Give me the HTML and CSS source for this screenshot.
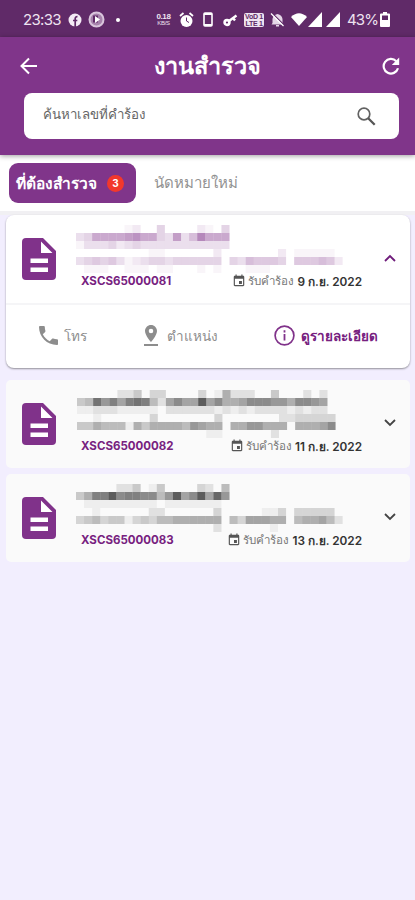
FILE: index.html
```html
<!DOCTYPE html>
<html lang="th">
<head>
<meta charset="utf-8">
<title>งานสำรวจ</title>
<link rel="stylesheet" href="styles.css">
</head>
<body>
<svg class="defs" width="0" height="0">
  <symbol id="doc" viewBox="0 0 34 42"><path fill="#80328a" d="M4 0H21L34 13V38Q34 42 30 42H4Q0 42 0 38V4Q0 0 4 0Z"/><path fill="#fff" d="M19 3.500V15H30.500ZM8.500 20.500h17.500v4.500H8.500ZM8.500 29.500h17.500v4.500H8.500Z"/></symbol>
  <symbol id="cal" viewBox="0 0 24 24"><path d="M17 12h-5v5h5v-5zM16 1v2H8V1H6v2H5c-1.110 0-2 .9-2 2v14c0 1.100.89 2 2 2h14c1.100 0 2-.9 2-2V5c0-1.100-.9-2-2-2h-1V1h-2zm3 18H5V8h14v11z"/></symbol>
</svg>
<div class="status">
  <div class="group left">
    <span class="clock">23:33</span>
    <svg width="14" height="14" viewBox="0 0 14 14"><circle cx="7" cy="7" r="6.500" fill="#f4eaf5"/><path d="M7.200 14V5.500Q7.200 3.500 9.500 3.700M5 7.500h4.300" fill="none" stroke="#602a68" stroke-width="1.700"/></svg>
    <svg width="17" height="17" viewBox="0 0 17 17"><circle cx="8.500" cy="8.500" r="7" fill="#a783ac" stroke="#d9c5dc" stroke-width="2"/><path d="M5 4.500h5v7H5z" fill="#602a68"/><path d="M7 5l5 3.500-5 3.500z" fill="#fff"/></svg>
    <i class="dot"></i>
  </div>
  <div class="group right">
    <span class="speed"><b>0.18</b><small>KB/S</small></span>
    <svg width="15" height="16" viewBox="0 0 15 16"><circle cx="7.500" cy="9" r="6" fill="#fff"/><path d="M1 4l3.500-3M14 4l-3.500-3" stroke="#fff" stroke-width="1.800"/><path d="M7.500 5.500V9l2.500 1.500" stroke="#602a68" fill="none"/></svg>
    <svg class="phone" width="10" height="15" viewBox="0 0 10 15"><rect x="1" y="1" width="8" height="13" rx="1" fill="none" stroke="#fff" stroke-width="1.600"/><path d="M1 2h8M1 13h8" stroke="#fff" stroke-width="2"/></svg>
    <svg class="key" width="15" height="14" viewBox="0 0 15 14"><circle cx="4" cy="9.500" r="2.400" fill="none" stroke="#fff" stroke-width="2.600"/><path d="M6 8l7.500-5.500M10 5l2 2.500" stroke="#fff" stroke-width="2.400"/></svg>
    <span class="volte"><b>VoD 1</b><b>LTE 1</b></span>
    <svg class="bell" width="15" height="15" viewBox="0 0 15 15"><path d="M2.500 11V7Q3 3 7.500 2Q12 3 12.500 7v4l1 1.500H1.500zM6 13h3v1.500H6z" fill="#e5d6e7"/><path d="M2.500 1.500l12 12" stroke="#602a68" stroke-width="1.200"/><path d="M1 1.500l12.500 12.500" stroke="#fff" stroke-width="1.200"/></svg>
    <svg class="wifi" width="16" height="13" viewBox="0 0 16 13"><path d="M0 4Q8-3.500 16 4L8 13Z" fill="#fff"/></svg>
    <svg class="sig" width="14" height="15" viewBox="0 0 14 15"><path d="M0 15L14 0V15z" fill="#fff"/></svg>
    <svg class="sig2" width="14" height="15" viewBox="0 0 14 15"><path d="M0 15L14 0V15z" fill="#fff"/></svg>
    <span class="pct">43%</span>
    <svg width="10" height="15" viewBox="0 0 10 15"><path d="M3 0h4v1.500H9q1 0 1 1V14q0 1-1 1H1q-1 0-1-1V2.500q0-1 1-1h2z" fill="#fff"/><path d="M2 3.500h6V8H2z" fill="#602a68"/></svg>
  </div>
</div>
<header class="header">
  <div class="bar">
    <svg width="18" height="18" viewBox="0 0 18 18"><path d="M17 9H2M9 1.500L1.500 9L9 16.500" fill="none" stroke="#fff" stroke-width="2"/></svg>
    <h1>งานสำรวจ</h1>
    <svg width="18" height="18" viewBox="0 0 18 18"><path d="M16 11.200A7.300 7.300 0 1 1 14.300 4.200" fill="none" stroke="#fff" stroke-width="2.200"/><path d="M17.200 .5V8H9.800Z" fill="#fff"/></svg>
  </div>
  <div class="search"><span>ค้นหาเลขที่คำร้อง</span>
    <svg width="19" height="19" viewBox="0 0 19 19"><circle cx="7" cy="7" r="5.800" fill="none" stroke="#626262" stroke-width="1.700"/><path d="M11.200 11.200l6.500 6.500" stroke="#555" stroke-width="2.300"/></svg>
  </div>
</header>
<nav class="tabs">
  <div class="tab active"><span>ที่ต้องสำรวจ</span><b>3</b></div>
  <div class="tab idle">นัดหมายใหม่</div>
</nav>
<main>
  <article class="card open">
    <div class="top">
      <svg class="doc" width="34" height="42"><use href="#doc"/></svg>
      <div class="info">
        <svg class="mosaic m1" width="275" height="48" fill="#80328a" data-rows="0000001200400002104|3488889a8843936b888|1333423433333333333|00000000011000000200000002011111|345453123443444444043655540555652|0111001110110001010001110000000"></svg>
        <div class="meta"><span class="code">XSCS65000081</span><span class="date"><svg width="14" height="14"><use href="#cal"/></svg><i>รับคำร้อง</i><b>9 ก.ย. 2022</b></span></div>
      </div>
      <svg class="chev" width="12" height="8" viewBox="0 0 12 8"><path d="M1 7L6 2L11 7" fill="none" stroke="#6f1c7b" stroke-width="1.800"/></svg>
    </div>
    <div class="actions">
      <div class="act call"><svg width="19" height="19" viewBox="0 0 18 18"><path fill="#8d8d8d" d="M3.600 7.800c1.440 2.830 3.760 5.140 6.590 6.590l2.200-2.200c.27-.27.67-.36 1.020-.24 1.120.37 2.330.57 3.590.57.550 0 1 .45 1 1V17c0 .55-.45 1-1 1C7.600 18 0 10.400 0 1c0-.55.45-1 1-1h3.500c.55 0 1 .45 1 1 0 1.250.2 2.450.57 3.570.11.350.03.740-.25 1.020L3.600 7.800z"/></svg><span>โทร</span></div>
      <div class="act place"><svg width="14" height="21" viewBox="0 0 14 21"><path fill="#8d8d8d" fill-rule="evenodd" d="M7 0C3.700 0 1 2.700 1 6c0 4.500 6 11 6 11s6-6.500 6-11c0-3.300-2.700-6-6-6zM7 3.700a2.300 2.300 0 1 1 0 4.600a2.300 2.300 0 1 1 0-4.600zM0 19h14v2H0z"/></svg><span>ตำแหน่ง</span></div>
      <div class="act detail"><svg width="21" height="21" viewBox="0 0 21 21"><circle cx="10.500" cy="10.500" r="9.400" fill="none" stroke="#80328a" stroke-width="1.700"/><path d="M10.500 5.200v2.200M10.500 9v6.500" stroke="#80328a" stroke-width="1.800"/></svg><span>ดูรายละเอียด</span></div>
    </div>
  </article>
  <article class="card">
    <div class="top">
      <svg class="doc" width="34" height="42"><use href="#doc"/></svg>
      <div class="info">
        <svg class="mosaic m2" width="275" height="48" fill="#111" data-rows="0000022403300003016222004000202|45b8a7aba527977d796679998869987|1122211111022222212121222212122|00100000030000000300000002233333|44655516466665876606688666066679|00000000000000001100000020000000"></svg>
        <div class="meta"><span class="code">XSCS65000082</span><span class="date"><svg width="14" height="14"><use href="#cal"/></svg><i>รับคำร้อง</i><b>11 ก.ย. 2022</b></span></div>
      </div>
      <svg class="chev" width="12" height="8" viewBox="0 0 12 8"><path d="M1 1L6 6L11 1" fill="none" stroke="#444" stroke-width="1.800"/></svg>
    </div>
  </article>
  <article class="card">
    <div class="top">
      <svg class="doc" width="34" height="42"><use href="#doc"/></svg>
      <div class="info">
        <svg class="mosaic m3" width="275" height="48" fill="#111" data-rows="0000022401400003205|46aad9aa9958d79d7c8|0111111111011111110|00100000022000000300000113033333|345344134355666666053777660566752|00000000000000000200000010000000"></svg>
        <div class="meta"><span class="code">XSCS65000083</span><span class="date"><svg width="14" height="14"><use href="#cal"/></svg><i>รับคำร้อง</i><b>13 ก.ย. 2022</b></span></div>
      </div>
      <svg class="chev" width="12" height="8" viewBox="0 0 12 8"><path d="M1 1L6 6L11 1" fill="none" stroke="#444" stroke-width="1.800"/></svg>
    </div>
  </article>
</main>
<script src="mosaic.js"></script>
</body>
</html>
```
FILE: styles.css
```css
* { box-sizing: border-box; }
body { margin: 0; min-height: 900px; background: #f2eefe; font-family: "Open Sans", "Noto Sans", sans-serif; }
svg { display: block; flex: none; }
.defs { position: absolute; }
.status { height: 37px; background: #602a68; color: #eee3f0; display: flex; justify-content: space-between; padding: 2px 25px 0 23px; }
.group { display: flex; align-items: center; }
.clock { font: 15px Inter, sans-serif; width: 38px; margin-right: 7px; letter-spacing: -.7px; }
.left svg + svg { margin-left: 6px; }
.dot { width: 4px; height: 4px; border-radius: 50%; background: #fff; margin-left: 11px; }
.speed { display: flex; flex-direction: column; width: 15px; font-family: "Liberation Sans", sans-serif; text-align: center; line-height: 7px; margin-right: 8px; align-items: center; }
.speed b { font-size: 8px; letter-spacing: -.4px; }
.speed small { font-size: 6px; letter-spacing: -.3px; }
.phone { margin-left: 9px; }
.key { margin-left: 10px; }
.volte { width: 20px; height: 14px; margin-left: 6px; background: #eee3f0; border-radius: 2px; color: #602a68; font-family: "Liberation Sans", sans-serif; display: flex; flex-direction: column; align-items: center; white-space: nowrap; }
.volte b { font-size: 7px; line-height: 7px; letter-spacing: -.3px; }
.bell { margin-left: 6px; }
.wifi { margin-left: 6px; }
.sig { margin-left: 1px; }
.sig2 { margin-left: 4px; }
.pct { font: 15px Inter, sans-serif; letter-spacing: -.9px; width: 29px; margin: 0 4px 0 7px; }
.header { height: 118px; background: #80358a; padding: 12px 16px 0 24px; box-shadow: 0 1px 5px rgba(0,0,0,.38); position: relative; }
.bar { display: flex; justify-content: space-between; align-items: center; height: 34px; margin: 0 -1px 0 -4px; }
h1 { margin: 0 5px 2px 0; font-size: 23.5px; line-height: 34px; color: #fff; font-weight: 700; }
.search { margin-top: 10px; height: 46px; background: #fff; border-radius: 8px; display: flex; align-items: center; justify-content: space-between; padding: 0 23px 0 19px; font-size: 13.300px; color: #666; }
.search span { margin-top: -3px; }
.tabs { height: 56px; background: #fff; display: flex; align-items: center; padding-left: 9px; }
.tab { height: 40px; display: flex; align-items: center; white-space: nowrap; }
.active { width: 127px; background: #80358a; color: #fff; border-radius: 9px; padding-left: 7px; font-size: 15.500px; font-weight: 600; }
.active b { width: 17px; height: 17px; border-radius: 50%; background: #f2382c; font: 700 10px/17px Inter, sans-serif; text-align: center; margin-left: auto; margin-right: 12px; }
.idle { margin-left: 18px; font-size: 15px; color: #929292; }
main { padding: 0 5px 0 6px; border-top: 4px solid #f1f0f3; display: flex; flex-direction: column; }
.card { height: 88px; margin-bottom: 6px; background: #fafafa; border-radius: 5px; }
.open { height: 153px; margin-bottom: 12px; background: #fff; border-radius: 8px; box-shadow: 0 1px 2px rgba(0,0,0,.4); }
.top { height: 88px; display: flex; }
.doc { margin: 23px 0 0 16px; }
.info { width: 300px; margin-left: 20px; padding-top: 10px; }
.m2 { margin-left: 1px; }
.meta { display: flex; justify-content: space-between; align-items: center; height: 16px; width: 281px; margin-left: 5px; white-space: nowrap; }
.code { color: #77217f; font: 700 11.500px Inter, sans-serif; }
.date { display: flex; align-items: center; color: #555; }
.date svg { fill: #555; margin-right: 2px; }
.date i { font-style: normal; font-size: 11.500px; color: #777; margin-right: 3px; }
.date b { font-family: Inter, "Open Sans", sans-serif; font-size: 11.800px; font-weight: 600; color: #333; }
.chev { margin: 39px 0 0 8px; }
.actions { height: 65px; border-top: 2px solid #f5f5f7; display: flex; align-items: center; padding: 0 0 2px 33px; }
.act { display: flex; align-items: center; font-size: 13.500px; color: #8d8d8d; white-space: nowrap; }
.act span { line-height: 20px; }
.call { width: 105px; gap: 6px; }
.place { width: 130px; gap: 9px; }
.detail { color: #77217f; gap: 6px; font-size: 13.500px; font-weight: 600; }
```
FILE: mosaic.js
```js
// Each hex digit is the strength of one 8px cell of a masked name or address.
document.querySelectorAll('.mosaic').forEach(svg => {
  svg.dataset.rows.split('|').forEach((row, y) => {
    [...row].forEach((digit, x) => {
      if (digit === '0') return;
      const cell = document.createElementNS('http://www.w3.org/2000/svg', 'rect');
      cell.setAttribute('x', x * 8.08);
      cell.setAttribute('y', y * 8);
      cell.setAttribute('width', 8.08);
      cell.setAttribute('height', 8);
      cell.setAttribute('fill-opacity', parseInt(digit, 16) / 19);
      svg.appendChild(cell);
    });
  });
});
```
